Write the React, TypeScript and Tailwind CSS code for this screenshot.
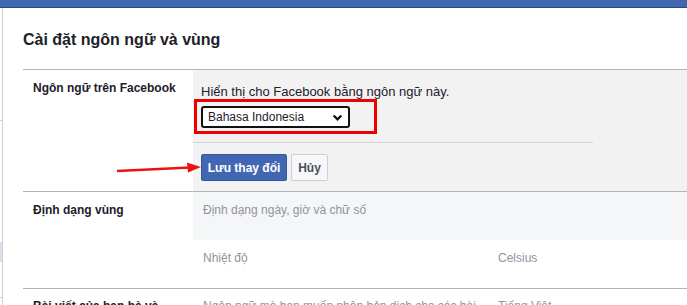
export default function App() {
  return (
    <div className="relative w-[687px] h-[305px] overflow-hidden bg-white font-['Liberation_Sans',Arial,sans-serif] text-[#1d2129]">
      <div className="h-[8px] bg-[#4267b2] border-b border-[#29487d]" />
      <div className="flex">
        {/* left edge of the page behind the dialog */}
        <div className="w-[3px] h-[297px] border-r border-[#cfcfcf] flex flex-col">
          <div className="h-[112px]" />
          <div className="h-px bg-[#d0d0d0]" />
          <div className="h-[121px]" />
          <div className="h-[20px] bg-[#d8dfea]" />
          <div className="h-[35px]" />
          <div className="h-px bg-[#d0d0d0]" />
        </div>

        <div className="flex-1 pl-[20px]">
          <div className="h-[61px] pt-[22px] text-[16px] font-bold leading-[20px]">
            Cài đặt ngôn ngữ và vùng
          </div>

          {/* language row */}
          <div className="flex h-[122px] border-t border-[#b4b4b4]">
            <div className="w-[170px] shrink-0 pl-[10px] pt-[10px] text-[12px] font-bold leading-[16px]">
              Ngôn ngữ trên Facebook
            </div>
            <div className="flex-1 bg-[#f2f2f2]">
              <div className="pl-[8px] pt-[14px] text-[13px] leading-[16px]">
                Hiển thị cho Facebook bằng ngôn ngữ này.
              </div>
              <div className="relative ml-[8px] mt-[6px] w-[149px]">
                <div className="flex h-[22px] w-[149px] items-center justify-between rounded-[3px] border-2 border-[#111] bg-white pl-[5px] pr-[5px] text-[12px]">
                  <span>Bahasa Indonesia</span>
                  <svg width="11" height="11" viewBox="0 0 12 12">
                    <path d="M1.8 3.8 L6 8 L10.2 3.8" fill="none" stroke="#111" strokeWidth="2.4" />
                  </svg>
                </div>
                <div className="absolute left-[-7px] top-[-7px] h-[35px] w-[183px] border-[3px] border-[#ee0000]" />
              </div>
              <div className="mt-[14px] h-px w-[400px] bg-[#d6d6d6]" />
              <div className="ml-[8px] mt-[11px] flex gap-[4px]">
                <button className="h-[27px] w-[86px] rounded-[2px] border border-[#365899] bg-[#4267b2] text-[12px] font-bold text-white">
                  Lưu thay đổi
                </button>
                <button className="h-[27px] w-[37px] rounded-[2px] border border-[#ccd0d5] bg-[#f6f7f9] text-[12px] font-bold text-[#4b4f56]">
                  Hủy
                </button>
              </div>
            </div>
          </div>

          {/* region row */}
          <div className="flex h-[97px] border-t border-[#b4b4b4]">
            <div className="w-[170px] shrink-0 pl-[10px] pt-[10px] text-[12px] font-bold leading-[16px]">
              Định dạng vùng
            </div>
            <div className="flex-1 text-[12px] leading-[16px] text-[#90949c]">
              <div className="h-[48px] bg-[#f5f6f7] pl-[10px] pt-[10px]">
                Định dạng ngày, giờ và chữ số
              </div>
              <div className="flex pl-[10px] pt-[10px]">
                <span className="w-[295px]">Nhiệt độ</span>
                <span>Celsius</span>
              </div>
            </div>
          </div>

          {/* translation row, cut off by the window edge */}
          <div className="flex border-t border-[#b4b4b4]">
            <div className="w-[170px] shrink-0 pl-[10px] pt-[9px] text-[12px] font-bold leading-[16px]">
              Bài viết của bạn bè và
            </div>
            <div className="flex pl-[10px] pt-[9px] text-[12px] leading-[16px] text-[#90949c]">
              <span className="w-[295px]">Ngôn ngữ mà bạn muốn nhận bản dịch cho các bài</span>
              <span>Tiếng Việt</span>
            </div>
          </div>
        </div>
      </div>

      {/* red annotation arrow */}
      <svg className="absolute left-[110px] top-[158px]" width="95" height="20" viewBox="0 0 95 20">
        <path d="M7 13 L80 9.5" stroke="#ee1111" strokeWidth="2.5" fill="none" />
        <path d="M77 4.5 L91 9 L78 14.5 Z" fill="#ee1111" />
      </svg>
    </div>
  );
}
